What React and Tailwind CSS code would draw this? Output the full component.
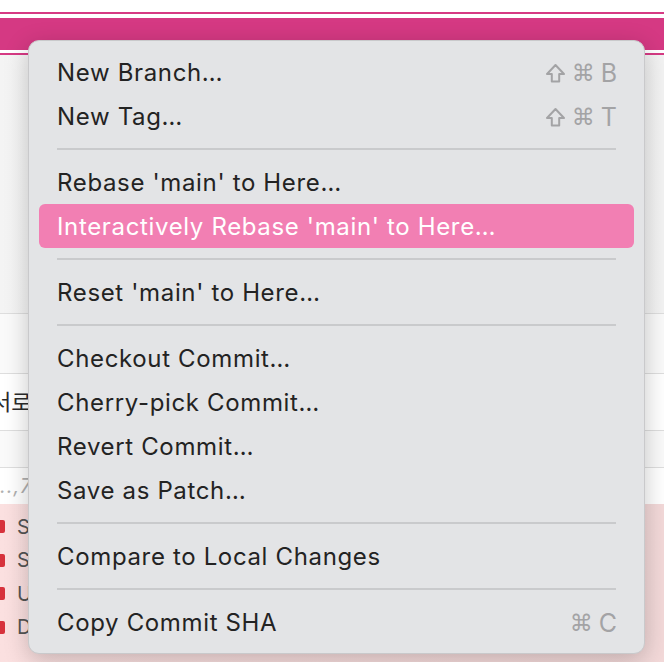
import { Fragment } from 'react'

const sections = [
  [
    { label: 'New Branch…', keys: ['shift', '⌘', 'B'] },
    { label: 'New Tag…', keys: ['shift', '⌘', 'T'] },
  ],
  [
    { label: "Rebase 'main' to Here…" },
    { label: "Interactively Rebase 'main' to Here…", active: true },
  ],
  [{ label: "Reset 'main' to Here…" }],
  [
    { label: 'Checkout Commit…' },
    { label: 'Cherry-pick Commit…' },
    { label: 'Revert Commit…' },
    { label: 'Save as Patch…' },
  ],
  [{ label: 'Compare to Local Changes' }],
  [{ label: 'Copy Commit SHA', keys: ['⌘', 'C'] }],
]

const fileRows = ['S', 'S', 'U', 'D']

function ShiftGlyph() {
  return (
    <svg width="21" height="21" viewBox="0 0 21 21" fill="none" stroke="currentColor" strokeWidth="2" strokeLinejoin="round">
      <path d="M10.5 2 L19 11 H14.2 V18.5 H6.8 V11 H2 Z" />
    </svg>
  )
}

function MenuItem({ item }) {
  return (
    <div
      className={`mx-[10px] flex h-[44px] items-center justify-between rounded-[6px] pl-[18px] pr-[17px] pt-[2px] ${
        item.active ? 'bg-[#f27fb3] text-white' : 'text-[#232323]'
      }`}
    >
      <span>{item.label}</span>
      {item.keys ? (
        <span className="flex items-center gap-[6px] tracking-normal text-[#a3a3a5]">
          {item.keys.map((k) =>
            k === 'shift' ? (
              <ShiftGlyph key={k} />
            ) : (
              <span key={k} className={k === '⌘' ? 'font-["DejaVu_Sans",sans-serif] text-[23px]' : 'text-[25px]'}>
                {k}
              </span>
            )
          )}
        </span>
      ) : null}
    </div>
  )
}

export default function App() {
  return (
    <div className="relative h-[662px] w-[664px] overflow-hidden bg-white font-['Inter','Noto_Sans_CJK_KR',sans-serif]">
      <div className="h-[12px] bg-white" />
      <div className="h-[2px] bg-[#d63a84]" />
      <div className="h-[4px] bg-white" />
      <div className="h-[32px] bg-[#d53983]" />
      <div className="h-[3px] bg-white" />
      <div className="h-[2px] bg-[#d63a84]" />
      <div className="h-[259px] border-b border-[#dedede] bg-gradient-to-r from-[#f4f4f4] via-white to-[#f3f3f3]" />
      <div className="h-[60px] border-b border-[#dedede] bg-[#fafafa]" />
      <div className="flex h-[57px] items-center border-b border-[#dedede] bg-white">
        <span className="ml-[-9px] text-[22px] text-[#2a2a2a]">서로</span>
      </div>
      <div className="h-[37px] border-b border-[#dedede] bg-[#fafafa]" />
      <div className="flex h-[36px] items-center bg-white">
        <span className="text-[20px] italic tracking-[1px] text-[#b0b0b0]">..,7</span>
      </div>
      <div className="flex h-[158px] flex-col bg-gradient-to-r from-[#fbe0e0] to-[#f3d9d9] pt-[6px]">
        {fileRows.map((l, i) => (
          <div key={i} className="flex h-[33.5px] items-center gap-[12px]">
            <span className="h-[13px] w-[5px] rounded-r-[2px] bg-[#d7323c]" />
            <span className="text-[20px] text-[#555]">{l}</span>
          </div>
        ))}
      </div>

      <div className="absolute left-[28px] top-[40px] w-[617px] rounded-[11px] border border-[#c9c9cb] bg-[#e3e4e6] py-[9px] text-[24px] leading-none tracking-[0.65px] shadow-[0_6px_24px_rgba(0,0,0,0.22)]">
        {sections.map((sec, si) => (
          <Fragment key={si}>
            {si > 0 ? (
              <div className="flex h-[22px] items-center px-[28px]">
                <div className="h-[2px] w-full bg-[#c9cacc]" />
              </div>
            ) : null}
            {sec.map((item) => (
              <MenuItem key={item.label} item={item} />
            ))}
          </Fragment>
        ))}
      </div>
    </div>
  )
}
